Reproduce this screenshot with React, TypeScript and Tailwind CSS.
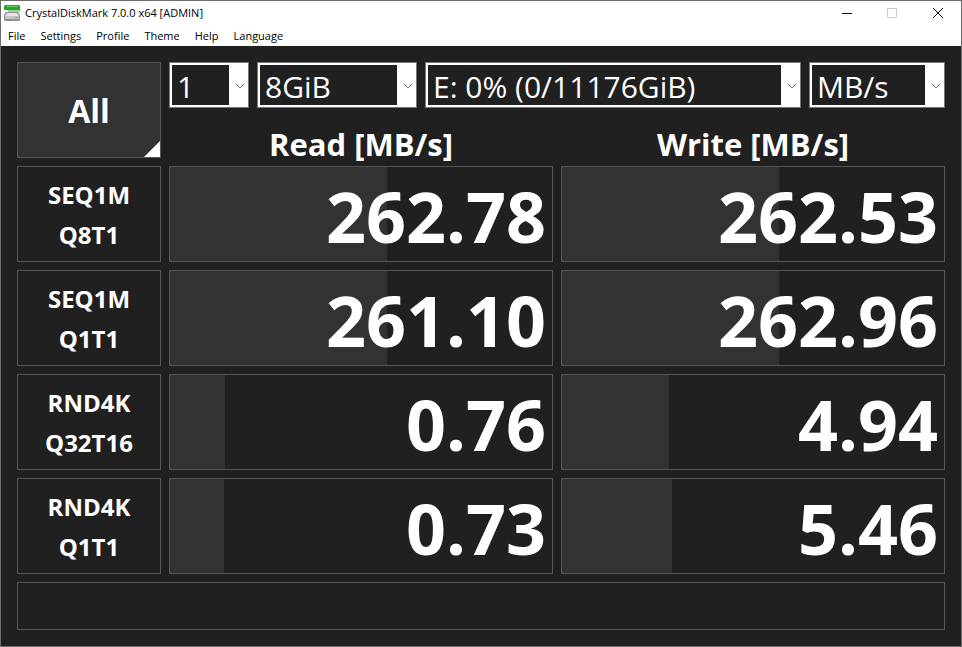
const menus = ["File", "Settings", "Profile", "Theme", "Help", "Language"];

const results = [
  { test: "SEQ1M", queue: "Q8T1", read: 262.78, write: 262.53 },
  { test: "SEQ1M", queue: "Q1T1", read: 261.1, write: 262.96 },
  { test: "RND4K", queue: "Q32T16", read: 0.76, write: 4.94 },
  { test: "RND4K", queue: "Q1T1", read: 0.73, write: 5.46 },
];

// log scale, 0.1 MB/s is empty and 100000 MB/s is full
const meterWidth = (score: number) => `calc(${(Math.log10(score * 10) * 100) / 6}% - 1px)`;

const DiskIcon = () => (
  <svg className="size-4" viewBox="0 0 16 16" aria-hidden="true">
    <path d="M1 0H15L16 1V5H0V1Z" fill="#25a32b" />
    <path d="M2 1H14V2H2Z" fill="#62d15f" />
    <path d="M4 5H16V7H4Z" fill="#8fdc8b" />
    <path d="M2 7H14L16 10V15L15 16H1L0 15V10Z" fill="#8d9290" />
    <path d="M3 8H13L15 11H1Z" fill="#e4e6e5" />
    <path d="M1 11H15V14H1Z" fill="#c3c7c5" />
    <path d="M11 12H14V13H11Z" fill="#5bb85a" />
  </svg>
);

const Dropdown = ({ label, value, className }: { label: string; value: string; className: string }) => {
  return (
    <div className={`relative border border-[#777777] ${className}`}>
      <select
        aria-label={label}
        defaultValue={value}
        className="block h-11 w-full appearance-none border-2 border-r-[19px] border-white bg-[#202020] pt-1 pl-[5px] text-[30px] leading-9 text-white outline-none">
        <option>{value}</option>
      </select>
      <svg
        className="pointer-events-none absolute top-5 right-[3px] h-[6px] w-[10px]"
        viewBox="0 0 10 6"
        fill="none"
        stroke="#444444"
        aria-hidden="true">
        <path d="M1 0.8L5 4.8L9 0.8" />
      </svg>
    </div>
  );
};

const Score = ({ value }: { value: number }) => {
  return (
    <td className="p-0">
      <div className="grid h-24 items-center border border-[#555555]">
        <div className="col-start-1 row-start-1 h-full bg-[#323232]" style={{ width: meterWidth(value) }} />
        <div className="col-start-1 row-start-1 pt-1 pr-1.5 text-right text-[70px] leading-none font-bold">
          {value.toFixed(2)}
        </div>
      </div>
    </td>
  );
};

export default function App() {
  return (
    <div className="flex min-h-screen flex-col border border-[#6e6e6e] bg-[#202020] font-['Open_Sans','Noto_Sans',sans-serif] text-white">
      <header className="bg-white text-black">
        <div className="flex h-6 items-center pl-[3px]">
          <DiskIcon />
          <h1 className="grow pl-[5px] text-[11px] leading-4">CrystalDiskMark 7.0.0 x64 [ADMIN]</h1>
          <button aria-label="Minimize" className="flex h-6 w-[45px] items-center justify-center">
            <svg className="size-[10px]" viewBox="0 0 10 10" stroke="#000000">
              <path d="M0 5.5H10" />
            </svg>
          </button>
          <button aria-label="Maximize" disabled className="flex h-6 w-[45px] items-center justify-center">
            <svg className="size-[10px]" viewBox="0 0 10 10" fill="none" stroke="#cccccc">
              <path d="M0.5 0.5H9.5V9.5H0.5Z" />
            </svg>
          </button>
          <button aria-label="Close" className="flex h-6 w-[47px] items-center justify-center">
            <svg className="size-[10px]" viewBox="0 0 10 10" stroke="#000000">
              <path d="M0 0L10 10M10 0L0 10" />
            </svg>
          </button>
        </div>
        <nav className="flex h-[21px] items-center gap-[15px] pl-[7px]">
          {menus.map((menu) => (
            <button key={menu} className="text-[11px] leading-4">
              {menu}
            </button>
          ))}
        </nav>
      </header>
      <main className="p-2">
        <table className="w-full table-fixed border-separate border-spacing-2">
          <colgroup>
            <col className="w-36" />
            <col />
            <col />
          </colgroup>
          <thead>
            <tr>
              <td rowSpan={2} className="p-0">
                <button className="relative block h-24 w-full border border-[#555555] bg-[#323232] pt-0.5 text-[32px] font-bold">
                  All
                  <svg className="absolute right-0 bottom-0 size-4" viewBox="0 0 16 16" aria-hidden="true">
                    <path d="M16 0V16H0Z" fill="#ffffff" />
                  </svg>
                </button>
              </td>
              <td colSpan={2} className="p-0">
                <div className="flex gap-2">
                  <Dropdown label="Test count" value="1" className="w-20" />
                  <Dropdown label="Test size" value="8GiB" className="w-40" />
                  <Dropdown label="Target drive" value="E: 0% (0/11176GiB)" className="grow" />
                  <Dropdown label="Unit" value="MB/s" className="w-[136px]" />
                </div>
              </td>
            </tr>
            <tr className="text-[31px] leading-7">
              <th className="p-0 pt-3.5">Read [MB/s]</th>
              <th className="p-0 pt-3.5">Write [MB/s]</th>
            </tr>
          </thead>
          <tbody>
            {results.map(({ test, queue, read, write }) => (
              <tr key={`${test} ${queue}`}>
                <th className="p-0">
                  <button className="block h-24 w-full border border-[#555555] pt-0.5 text-2xl leading-10 font-bold">
                    {test}
                    <br />
                    {queue}
                  </button>
                </th>
                <Score value={read} />
                <Score value={write} />
              </tr>
            ))}
          </tbody>
        </table>
        <div className="mx-2 mb-2 h-12 border border-[#555555]" />
      </main>
    </div>
  );
}
